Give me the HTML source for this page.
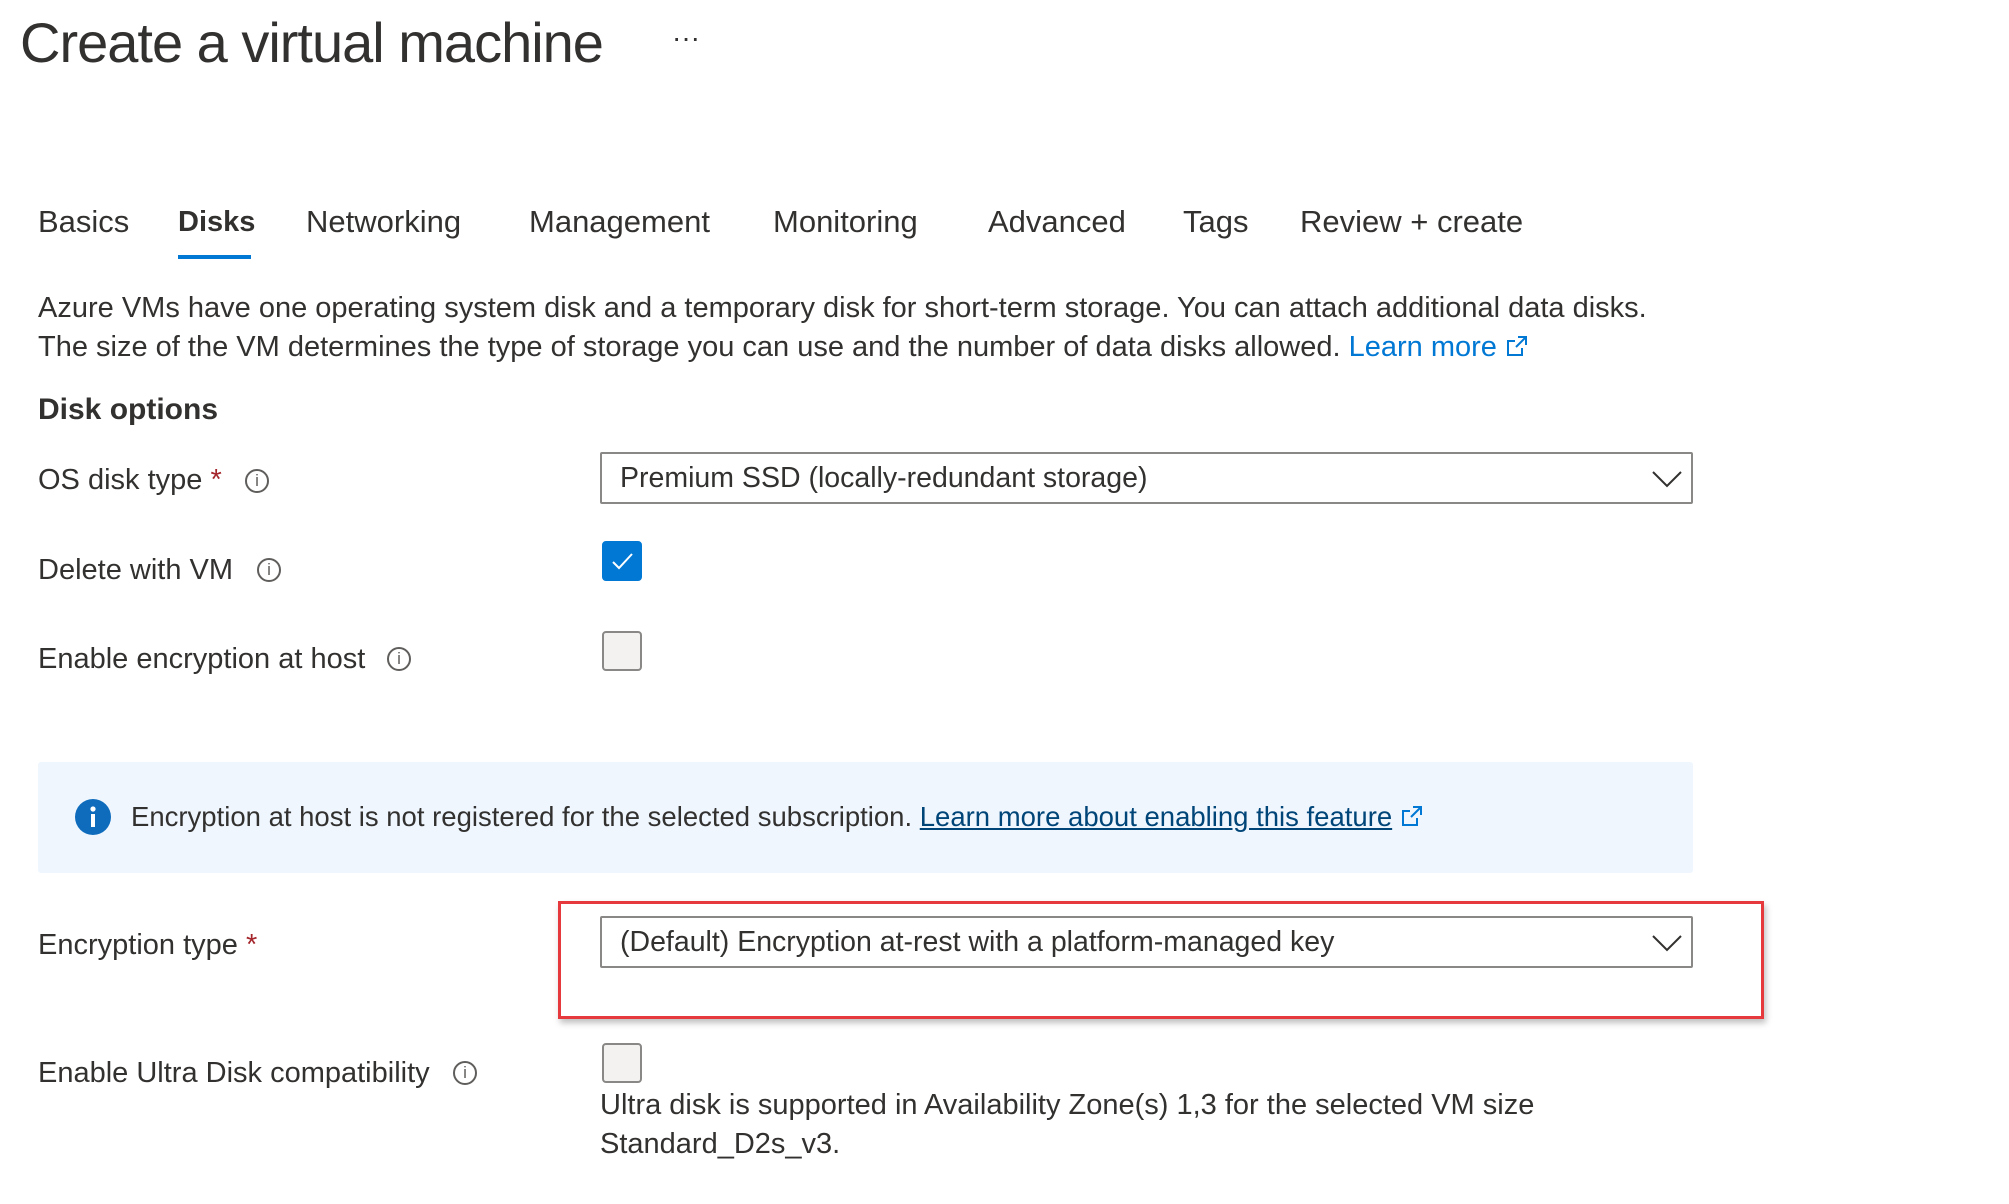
<!DOCTYPE html>
<html><head><meta charset="utf-8"><style>
body{margin:0;width:2009px;height:1204px;background:#fff;position:relative;overflow:hidden;font-family:"Liberation Sans",sans-serif;color:#323130}
.a{position:absolute;white-space:nowrap}
.t{font-size:31px;line-height:36px}
.lbl{font-size:29px;line-height:36px}
.info{position:absolute;width:24px;height:24px;border:2px solid #605e5c;border-radius:50%;box-sizing:border-box}
.info:after{content:"i";position:absolute;left:0;right:0;top:0;text-align:center;font-size:17px;line-height:20px;color:#605e5c}
.dd{position:absolute;left:600px;width:1093px;height:52px;border:2px solid #8a8886;box-sizing:border-box;border-radius:2px}
.dd span{position:absolute;left:18px;top:7px;font-size:28.5px;line-height:34px}
.cb{position:absolute;left:602px;width:40px;height:40px;border:2px solid #8a8886;border-radius:4px;box-sizing:border-box;background:#f3f2f1}
.req{color:#a4262c}
</style></head><body>
<div class="a" style="left:20px;top:8px;font-size:56px;line-height:70px;color:#323130;letter-spacing:-1px">Create a virtual machine</div>
<div class="a" style="left:672px;top:22px;font-size:28px;color:#323130">···</div>

<div class="a t" style="left:38px;top:204px">Basics</div>
<div class="a t" style="left:178px;top:204px;font-weight:bold;font-size:29px">Disks</div>
<div class="a t" style="left:306px;top:204px">Networking</div>
<div class="a t" style="left:529px;top:204px">Management</div>
<div class="a t" style="left:773px;top:204px">Monitoring</div>
<div class="a t" style="left:988px;top:204px">Advanced</div>
<div class="a t" style="left:1183px;top:204px">Tags</div>
<div class="a t" style="left:1300px;top:204px">Review + create</div>
<div class="a" style="left:178px;top:255px;width:73px;height:4px;background:#0078d4"></div>

<div class="a lbl" style="left:38px;top:290px">Azure VMs have one operating system disk and a temporary disk for short-term storage. You can attach additional data disks.</div>
<div class="a lbl" style="left:38px;top:329px">The size of the VM determines the type of storage you can use and the number of data disks allowed. <span style="color:#0078d4">Learn more <svg width="24" height="24" viewBox="0 0 24 24" style="vertical-align:-2px"><path d="M13 3h8v8M21 3L11 13M17 14v7H3V7h7" fill="none" stroke="#0078d4" stroke-width="2"/></svg></span></div>

<div class="a" style="left:38px;top:392px;font-size:30px;font-weight:bold;line-height:36px">Disk options</div>

<div class="a lbl" style="left:38px;top:462px">OS disk type <span class="req">*</span></div>
<div class="info" style="left:245px;top:469px"></div>
<div class="dd" style="top:452px"><span>Premium SSD (locally-redundant storage)</span>
<svg style="position:absolute;left:1050px;top:16px" width="30" height="18" viewBox="0 0 30 18"><path d="M1 2l14 14L29 2" fill="none" stroke="#323130" stroke-width="2"/></svg></div>

<div class="a lbl" style="left:38px;top:552px">Delete with VM</div>
<div class="info" style="left:257px;top:558px"></div>
<div class="cb" style="top:541px;background:#0078d4;border-color:#0078d4"><svg width="36" height="36" viewBox="0 0 36 36"><path d="M9 19l6 6L28 11" fill="none" stroke="#fff" stroke-width="2"/></svg></div>

<div class="a lbl" style="left:38px;top:641px">Enable encryption at host</div>
<div class="info" style="left:387px;top:647px"></div>
<div class="cb" style="top:631px"></div>

<div class="a" style="left:38px;top:762px;width:1655px;height:111px;background:#eff6fe;border-radius:3px"></div>
<svg class="a" style="left:75px;top:799px" width="36" height="36" viewBox="0 0 36 36"><circle cx="18" cy="18" r="18" fill="#0f6cbd"/><circle cx="18" cy="10" r="2.6" fill="#fff"/><rect x="16" y="15" width="4" height="13" fill="#fff"/></svg>
<div class="a" style="left:131px;top:799px;font-size:27.5px;line-height:36px">Encryption at host is not registered for the selected subscription. <span style="color:#004578;text-decoration:underline">Learn more about enabling this feature</span> <svg width="24" height="24" viewBox="0 0 24 24" style="vertical-align:-2px"><path d="M13 3h8v8M21 3L11 13M17 14v7H3V7h7" fill="none" stroke="#0078d4" stroke-width="2"/></svg></div>

<div class="a lbl" style="left:38px;top:927px">Encryption type <span class="req">*</span></div>
<div class="a" style="left:558px;top:901px;width:1206px;height:118px;border:3px solid #e5393e;box-sizing:border-box;box-shadow:2px 4px 6px rgba(0,0,0,0.25)"></div>
<div class="dd" style="top:916px"><span>(Default) Encryption at-rest with a platform-managed key</span>
<svg style="position:absolute;left:1050px;top:16px" width="30" height="18" viewBox="0 0 30 18"><path d="M1 2l14 14L29 2" fill="none" stroke="#323130" stroke-width="2"/></svg></div>

<div class="a lbl" style="left:38px;top:1055px">Enable Ultra Disk compatibility</div>
<div class="info" style="left:453px;top:1061px"></div>
<div class="cb" style="top:1043px"></div>
<div class="a lbl" style="left:600px;top:1087px">Ultra disk is supported in Availability Zone(s) 1,3 for the selected VM size</div>
<div class="a lbl" style="left:600px;top:1126px">Standard_D2s_v3.</div>
</body></html>
